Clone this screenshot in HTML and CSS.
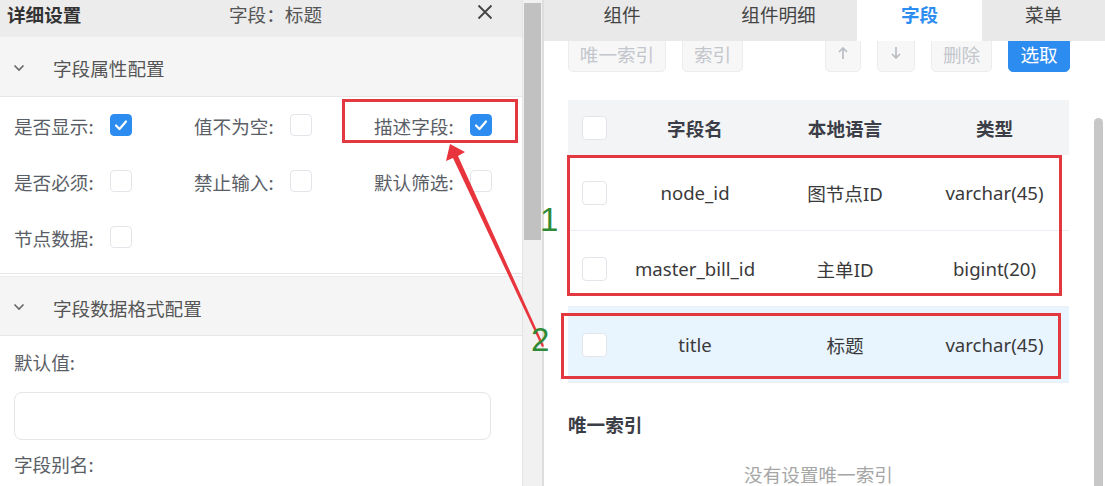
FILE: index.html
```html
<!DOCTYPE html>
<html lang="zh-CN">
<head>
<meta charset="utf-8">
<title>字段设置</title>
<link rel="stylesheet" href="styles.css">
</head>
<body>
<div class="page">
  <div class="left">
    <div class="dlg-head">
      <span class="dlg-title">详细设置</span>
      <span class="dlg-sub">字段：标题</span>
      <svg class="dlg-close" width="16" height="16" viewBox="0 0 16 16"><path d="M1.5 1.5 L14.5 14.5 M14.5 1.5 L1.5 14.5" stroke="#444" stroke-width="1.8" fill="none"/></svg>
    </div>
    <div class="sec-head">
      <svg class="chev" width="12" height="8" viewBox="0 0 12 8"><path d="M1.5 1.5 L6 6 L10.5 1.5" stroke="#666" stroke-width="1.6" fill="none"/></svg>
      <span class="sec-title">字段属性配置</span>
    </div>
    <div class="sec-body">
      <div class="cell"><span class="lbl">是否显示:</span><span class="cb on"><svg width="22" height="22" viewBox="0 0 22 22"><path d="M6 11.5 L9.5 15 L16 7.5" stroke="#fff" stroke-width="2.2" fill="none" stroke-linecap="round" stroke-linejoin="round"/></svg></span></div>
      <div class="cell"><span class="lbl">值不为空:</span><span class="cb"></span></div>
      <div class="cell"><span class="lbl">描述字段:</span><span class="cb on"><svg width="22" height="22" viewBox="0 0 22 22"><path d="M6 11.5 L9.5 15 L16 7.5" stroke="#fff" stroke-width="2.2" fill="none" stroke-linecap="round" stroke-linejoin="round"/></svg></span></div>
      <div class="cell"><span class="lbl">是否必须:</span><span class="cb"></span></div>
      <div class="cell"><span class="lbl">禁止输入:</span><span class="cb"></span></div>
      <div class="cell"><span class="lbl">默认筛选:</span><span class="cb"></span></div>
      <div class="cell"><span class="lbl">节点数据:</span><span class="cb"></span></div>
    </div>
    <div class="sec-head sec2">
      <svg class="chev" width="12" height="8" viewBox="0 0 12 8"><path d="M1.5 1.5 L6 6 L10.5 1.5" stroke="#666" stroke-width="1.6" fill="none"/></svg>
      <span class="sec-title">字段数据格式配置</span>
    </div>
    <div class="sec-body2">
      <div class="flabel first">默认值:</div>
      <div class="finput"></div>
      <div class="flabel">字段别名:</div>
    </div>
  </div>
  <div class="lscroll"><div class="lthumb"></div></div>
  <div class="right">
    <div class="tabs">
      <div class="tab t1">组件</div>
      <div class="tab t2">组件明细</div>
      <div class="tab active">字段</div>
      <div class="tab t4">菜单</div>
    </div>
    <div class="toolbar">
      <div class="group">
        <div class="btn w98">唯一索引</div>
        <div class="btn w61">索引</div>
      </div>
      <div class="group">
        <div class="btn w36"><svg width="12" height="14" viewBox="0 0 12 14"><path d="M6 13 L6 2 M2 6 L6 2 L10 6" stroke="#b9bdc4" stroke-width="1.7" fill="none"/></svg></div>
        <div class="btn w38"><svg width="12" height="14" viewBox="0 0 12 14"><path d="M6 1 L6 12 M2 8 L6 12 L10 8" stroke="#b9bdc4" stroke-width="1.7" fill="none"/></svg></div>
        <div class="btn w61">删除</div>
        <div class="btn w62 primary">选取</div>
      </div>
    </div>
    <div class="table">
      <div class="thead">
        <div class="ccb"><span class="cb big"></span></div>
        <div>字段名</div>
        <div>本地语言</div>
        <div>类型</div>
      </div>
      <div class="trow">
        <div class="ccb"><span class="cb big"></span></div>
        <div>node_id</div>
        <div>图节点ID</div>
        <div>varchar(45)</div>
      </div>
      <div class="trow">
        <div class="ccb"><span class="cb big"></span></div>
        <div>master_bill_id</div>
        <div>主单ID</div>
        <div>bigint(20)</div>
      </div>
      <div class="trow sel">
        <div class="ccb"><span class="cb big"></span></div>
        <div>title</div>
        <div>标题</div>
        <div>varchar(45)</div>
      </div>
    </div>
    <div class="idx-title">唯一索引</div>
    <div class="empty">没有设置唯一索引</div>
    <div class="rthumb"></div>
  </div>

  <div class="mark m1"></div>
  <div class="mark m2"></div>
  <div class="mark m3"></div>
  <svg class="arrow" width="1105" height="486" viewBox="0 0 1105 486">
    <polygon points="450,144 465,152 458,156 544,346 542,347 453,158 446,161" fill="#e8343c"/>
  </svg>
  <div class="num n1">1</div>
  <div class="num n2">2</div>
</div>
</body>
</html>
```
FILE: styles.css
```css
* { box-sizing: border-box; margin: 0; padding: 0; }
html, body { width: 1105px; height: 486px; overflow: hidden; background: #fff; }
body {
  font-family: "Noto Sans CJK SC", "Noto Sans", sans-serif;
  font-size: 18.6px;
  color: #555;
}
.page { position: relative; display: flex; width: 1105px; height: 486px; overflow: hidden; }

/* left panel */
.left {
  width: 523px; flex: none;
  border-right: 1px solid #e4e4e4;
  display: flex; flex-direction: column;
  overflow: hidden;
}
.dlg-head {
  height: 37px; flex: none;
  background: #ececec;
  display: flex; align-items: flex-start;
  line-height: 27px;
}
.dlg-title { font-weight: 700; color: #333; margin-left: 7px; width: 222px; }
.dlg-sub { color: #555; width: 248px; }
.dlg-close { margin-top: 4px; }

.sec-head {
  height: 60px; flex: none;
  background: #f5f5f5;
  border-bottom: 1px solid #e6e6e6;
  display: flex; align-items: center;
  padding: 2px 0 0 13px;
}
.sec-title { margin-left: 28px; color: #555; line-height: 27px; }
.sec2 { margin-top: 2px; border-top: 1px solid #ececec; }

.sec-body {
  height: 177px; flex: none;
  border-bottom: 1px solid #e6e6e6;
  padding-left: 14px;
  display: grid;
  grid-template-columns: repeat(3, 180px);
  grid-auto-rows: 56px;
}
.cell { display: flex; align-items: center; }
.lbl { width: 96px; color: #5a5e66; line-height: 27px; }
.cb {
  width: 22px; height: 22px;
  border: 1px solid #e3e5ea;
  border-radius: 4px;
  background: #fff;
  display: inline-block;
}
.cb.on { background: #2d8cf0; border-color: #2d8cf0; }
.cb.on svg { display: block; margin: -1px; }
.cb.big { width: 25px; height: 24px; }

.sec-body2 { padding: 0 31px 0 14px; }
.flabel { line-height: 27px; color: #5a5e66; margin-top: 10px; }
.flabel.first { margin-top: 12px; }
.finput {
  margin-top: 17px;
  height: 48px; width: 477px;
  border: 1px solid #e6e6e6;
  border-radius: 8px;
}

/* left scrollbar */
.lscroll {
  width: 21px; flex: none;
  background: #f1f1f1;
  border-right: 2px solid #dedede;
  padding: 3px 1px 0;
}
.lthumb { height: 237px; background: #c1c1c1; }

/* right panel */
.right { flex: 1; position: relative; }
.tabs {
  position: relative; z-index: 1;
  display: flex; height: 41px;
  background: #e9e9e9;
  line-height: 27px;
}
.tab { text-align: center; color: #444; }
.t1 { width: 156px; }
.t2 { width: 157px; }
.tab.active { width: 125px; background: #fff; color: #2d8cf0; font-weight: 700; }
.t4 { flex: 1; }

.toolbar {
  display: flex; justify-content: space-between;
  margin: -7px 0 0 24px;
  width: 502px; height: 38px;
}
.group { display: flex; gap: 16px; }
.btn {
  height: 38px;
  border: 1px solid #ececec;
  background: #f7f7f7;
  color: #c3c6cc;
  border-radius: 5px;
  display: flex; align-items: center; justify-content: center;
  line-height: 27px;
}
.w98 { width: 98px; }
.w61 { width: 61px; }
.w36 { width: 36px; }
.w38 { width: 38px; }
.w62 { width: 62px; }
.btn.primary { background: #2d8cf0; border-color: #2d8cf0; color: #fff; }

.table { margin: 28px 0 0 24px; width: 501px; }
.thead, .trow {
  display: grid;
  grid-template-columns: 52px 150px 150px 149px;
  align-items: center;
  text-align: center;
}
.thead { height: 55px; background: #f3f4f6; font-weight: 700; color: #3b3e46; }
.trow {
  height: 76px;
  border-bottom: 1px solid #ebeef5;
  color: #3a3a3a;
  font-family: "Noto Sans", "Noto Sans CJK SC", sans-serif;
}
.trow.sel { background: #e8f4fe; }
.ccb { text-align: left; padding-left: 14px; display: flex; }

.idx-title { margin: 27px 0 0 24px; font-weight: 700; color: #3b3e46; line-height: 27px; }
.empty { margin: 23px 0 0 24px; width: 501px; text-align: center; color: #a6a6a6; line-height: 27px; }

.rthumb {
  position: absolute; right: 2px; top: 118px;
  width: 9px; height: 420px;
  border-radius: 5px;
  background: #c7c7c7;
}

/* annotations overlay */
.mark { position: absolute; border: 3px solid #e2383f; }
.m1 { left: 342px; top: 99px; width: 176px; height: 44px; }
.m2 { left: 567px; top: 155px; width: 495px; height: 141px; }
.m3 { left: 561px; top: 313px; width: 500px; height: 66px; }
.arrow { position: absolute; left: 0; top: 0; pointer-events: none; }
.num {
  position: absolute;
  font-family: "Liberation Sans", sans-serif;
  font-size: 33px; line-height: 33px;
  color: #2f8a35;
}
.n1 { left: 540px; top: 203px; }
.n2 { left: 531px; top: 323px; }
```
